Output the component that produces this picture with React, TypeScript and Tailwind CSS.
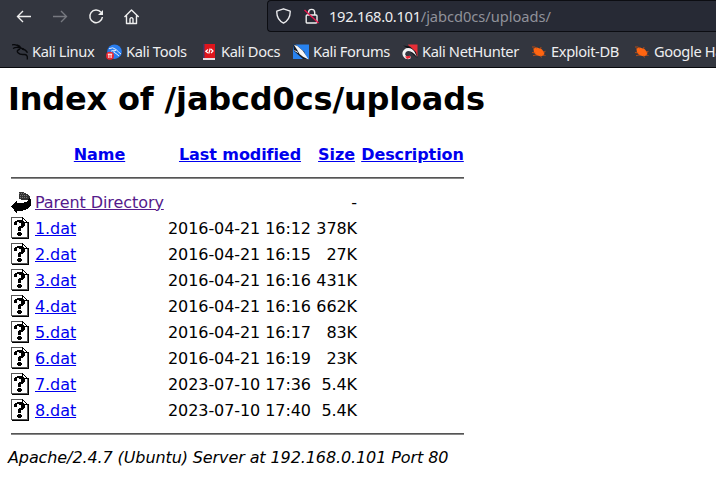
import React from "react";

const files = [
  ["1.dat", "2016-04-21 16:12", "378K"],
  ["2.dat", "2016-04-21 16:15", "27K"],
  ["3.dat", "2016-04-21 16:16", "431K"],
  ["4.dat", "2016-04-21 16:16", "662K"],
  ["5.dat", "2016-04-21 16:17", "83K"],
  ["6.dat", "2016-04-21 16:19", "23K"],
  ["7.dat", "2023-07-10 17:36", "5.4K"],
  ["8.dat", "2023-07-10 17:40", "5.4K"],
];

function Dragon() {
  return (
    <svg className="size-4" viewBox="0 0 16 16" fill="none" stroke="#08090c">
      <path d="M0 .8Q4 0 6.5 2.3T12 5.2M1 4.5Q5 2.2 9.5 4.8M5 .8Q8 1.5 9 4" strokeWidth="1.2" />
      <path d="M8 5Q4 6.5 6 8.7T12 10.5 15.3 15.5M10 5Q14 5.5 15.5 8.8" strokeWidth="1.4" />
    </svg>
  );
}
function Tools() {
  return (
    <svg className="size-4" viewBox="0 0 16 16">
      <circle cx="8.5" cy="7.7" r="7.3" fill="#287df0" />
      <path d="M3 4.7Q7 2.5 10 5.5T15 10M5 7.2Q8 5.8 10 6.5M8 6.5Q6.8 8.5 10 9.5L13 12" fill="none" stroke="#e5edf9" strokeWidth="1" />
      <circle cx="4" cy="11.8" r="4" fill="#e92732" />
      <path d="M1.8 10.2h4.4M2.9 10v4M5.1 10v4" stroke="#fff" strokeWidth="1" />
    </svg>
  );
}
function Docs() {
  return (
    <svg className="size-4" viewBox="0 0 16 16">
      <path d="M2 0h12v14H2z" fill="#df151c" />
      <path d="M2 0h1.5v14H2z" fill="#3d3566" />
      <path d="M2 14h12v2H2z" fill="#e7dce0" />
      <path d="M7 5.5L4.8 7.2 7 9M10 5L12 7 10 9M9.2 4.5L7.8 9.7" fill="none" stroke="#fff" strokeWidth="1.2" />
    </svg>
  );
}
function Forums() {
  return (
    <svg className="size-4" viewBox="0 0 16 16">
      <path d="M0 .5h16v14.5H0z" fill="#2882ef" />
      <path d="M0 .5h2.5L11 7.5l3 7.5h-4L1 7z" fill="#171b24" />
      <path d="M1 1l3 .8 5.8 5 2 3L15.5 15.5 10 12.8 6.5 10 4 5.5z" fill="#f5f5f5" />
      <path d="M1.5 6.5l3.5 2" stroke="#e8f2ff" />
    </svg>
  );
}
function Hunter() {
  return (
    <svg className="size-4" viewBox="0 0 16 16">
      <path d="M6 .5h9.5v12L9.5 7z" fill="#e72e37" />
      <path d="M1 1.5l7 1 6 5.5 1.5 6-4-3-4-4H3l4-2z" fill="#121419" />
      <path d="M12.5 7.8Q9.5 2.8 4 4.3C-.8 7-.6 12 3.5 14.8Q8 16 9 13.8l-1-2Q4.5 13.5 3.2 10.8 3 7.2 6.7 7.1 10.2 7.2 15 13z" fill="#f2f2f3" />
      <path d="M3 12.5L5 15 8.8 13.7 7.8 11.8z" fill="#ed2533" />
    </svg>
  );
}
function Bug() {
  return (
    <svg className="size-4" viewBox="0 0 16 16">
      <path d="M2.4 4.4L6 3.6l4.8 1.6 2.7 3.5-.9 2.8-3.3.8-4-1L2.9 8.2z" fill="#ff6511" />
      <path d="M1 3h3l2 1.5M9.5 5l.5-2M12 8.3l2.5-1M12 10.8l2.5.7M9.5 11.5l1 2M6 10.8l-4 .9M4.5 9l-3.5-.5" stroke="#cf520f" strokeWidth=".8" fill="none" />
    </svg>
  );
}
function UnknownFile() {
  return (
    <svg className="block h-[22px] w-5" viewBox="0 0 20 22" shapeRendering="crispEdges">
      <path d="M.5.5h11l5 5v15H.5z" fill="#fff" stroke="#555" />
      <path d="M17 5h1v17H1v-1h16z" />
      <path d="M11 0h1v1h1v1h1v1h1v1h1v1h1v1h-6z" />
      <path d="M12 2h1v1h1v1h1v1h-3z" fill="#fff" />
      <path d="M4 4h2V3h6v1h1v1h1v4h-1v1h-1v1h-2v3H7v-4h1V9h2V6H8V5H6v3H3V5h1zM7 15h3v1h1v2h-1v1H7v-1H6v-2h1z" />
    </svg>
  );
}
function ParentIcon() {
  return (
    <svg className="block h-[22px] w-5" viewBox="0 0 20 22" shapeRendering="crispEdges">
      <path d="M0 15l6-6v3h6l5-2 1-4h1l1 4v4l-2 3-4 2-4 1H6v3z" />
      <path d="M8 1h4l4 2 3 2v2l-3 2h-4l-4-1z" fill="#333" />
      <path d="M8 2.5h5M9 4.5h7M9 6.5h8" stroke="#777" strokeDasharray="1 1" />
    </svg>
  );
}

const bookmarks = [
  { label: "Kali Linux", Icon: Dragon, width: "w-[94px]" },
  { label: "Kali Tools", Icon: Tools, width: "w-[95px]" },
  { label: "Kali Docs", Icon: Docs, width: "w-[92px]" },
  { label: "Kali Forums", Icon: Forums, width: "w-[109px]" },
  { label: "Kali NetHunter", Icon: Hunter, width: "w-[129px]" },
  { label: "Exploit-DB", Icon: Bug, width: "w-[103px]" },
  { label: "Google Hacking DB", Icon: Bug, width: "w-[160px]" },
];

function Rule() {
  return (
    <tr>
      <th colSpan={5} className="h-[19px] p-px">
        <hr className="h-[2px] border-0 border-t border-[#555] bg-[#888]" />
      </th>
    </tr>
  );
}

export default function App() {
  return (
    <div className="h-[491px] w-[716px] overflow-hidden bg-white font-['DejaVu_Sans',sans-serif] text-black">
      <header className="h-[68px] border-b border-[#08090d] bg-[#33363f] font-['Noto_Sans',sans-serif] text-[#eeeef0]">
        <div className="flex h-8 items-start">
          <nav className="flex w-[267px] shrink-0 gap-5 pl-4 pt-[9px]">
            <svg className="size-4" viewBox="0 0 16 16" fill="none" stroke="#eee" strokeWidth="1.35"><path d="M15 7.5H2M7 2L1.5 7.5 7 13" /></svg>
            <svg className="size-4" viewBox="0 0 16 16" fill="none" stroke="#777980" strokeWidth="1.35"><path d="M1 7.5h13M9 2l5.5 5.5L9 13" /></svg>
            <svg className="size-4" viewBox="0 0 16 16" fill="none" stroke="#eee" strokeWidth="1.5"><path d="M13 3.3A6.3 6.3 0 1 0 14.4 8" /><path d="M15 1v5h-5z" fill="#eee" stroke="none" /></svg>
            <svg className="size-4" viewBox="0 0 16 16" fill="none" stroke="#eee" strokeWidth="1.4" strokeLinejoin="round"><path d="M.5 8L7.5 1l7.2 7M2.5 6.5v8h10v-8M6 14.5V9.8Q7.5 7.5 9 9.8v4.7" /></svg>
          </nav>
          <div className="flex h-8 w-[455px] shrink-0 items-center rounded-l border-y border-l border-[#0c0d12] bg-[#272a35] pl-2">
            <svg className="size-4" viewBox="0 0 16 16" fill="none" stroke="#ededf0" strokeWidth="1.35" strokeLinejoin="round"><path d="M7.5.8l6.7 2.3c.2 6-2.5 9.8-6.7 12C3.2 12.9.5 9.1.8 3.1z" /></svg>
            <svg className="ml-3 size-4" viewBox="0 0 16 16" fill="none" stroke="#eee" strokeWidth="1.4"><rect x="2.2" y="7" width="10.8" height="8" rx="1" /><path d="M4.5 7V4.5a3.1 3.1 0 0 1 6.2 0V7" /><path d="M.5 2L14.5 15" stroke="#e7164d" /></svg>
            <span className="ml-[9px] whitespace-pre pb-px text-[14.67px] leading-5 tracking-[-0.3px]">192.168.0.101<span className="tracking-[-0.04px] text-[#90919a]">/jabcd0cs/uploads/</span></span>
          </div>
        </div>
        <nav className="flex h-9 items-center overflow-hidden pl-3 pt-[3px]">
          {bookmarks.map(({ label, Icon, width }) => (
            <div key={label} className={`flex shrink-0 items-center gap-1 whitespace-nowrap text-[14.67px] leading-5 tracking-[-0.36px] ${width}`}>
              <Icon />
              <span className="pb-[2px]">{label}</span>
            </div>
          ))}
        </nav>
      </header>
      <main className="pl-2 text-base leading-[19px]">
        <h1 className="h-[73px] pt-3 text-[32px] font-bold leading-[38px] tracking-[-0.17px]">Index of /jabcd0cs/uploads</h1>
        <table className="w-[459px] table-fixed border-separate border-spacing-[2px] whitespace-nowrap tracking-[-0.08px] [&_a]:underline">
          <colgroup>
            <col className="w-[22px]" /><col className="w-[131px]" /><col className="w-[146px]" /><col className="w-[43px]" /><col className="w-[105px]" />
          </colgroup>
          <tbody>
            <tr className="h-[23px] text-[#0000ee]">
              <th className="p-px" />
              <th className="p-px"><a>Name</a></th>
              <th className="p-px"><a>Last modified</a></th>
              <th className="p-px"><a>Size</a></th>
              <th className="p-px"><a>Description</a></th>
            </tr>
            <tr>
              <th colSpan={5} className="h-[20px] p-px pb-[2px]">
                <hr className="h-[2px] border-0 border-t border-[#555] bg-[#888]" />
              </th>
            </tr>
            <tr className="h-6">
              <td className="p-px"><ParentIcon /></td>
              <td className="p-px"><a className="text-[#551a8b]">Parent Directory</a></td>
              <td />
              <td className="p-px text-right">-</td>
              <td />
            </tr>
            {files.map(([name, date, size]) => (
              <tr key={name} className="h-6">
                <td className="p-px"><UnknownFile /></td>
                <td className="p-px"><a className="text-[#0000ee]">{name}</a></td>
                <td className="whitespace-pre p-px text-right">{date + " "}</td>
                <td className="p-px text-right">{size}</td>
                <td />
              </tr>
            ))}
            <Rule />
          </tbody>
        </table>
        <address className="mt-[3px] italic tracking-[-0.1px]">Apache/2.4.7 (Ubuntu) Server at 192.168.0.101 Port 80</address>
      </main>
    </div>
  );
}
